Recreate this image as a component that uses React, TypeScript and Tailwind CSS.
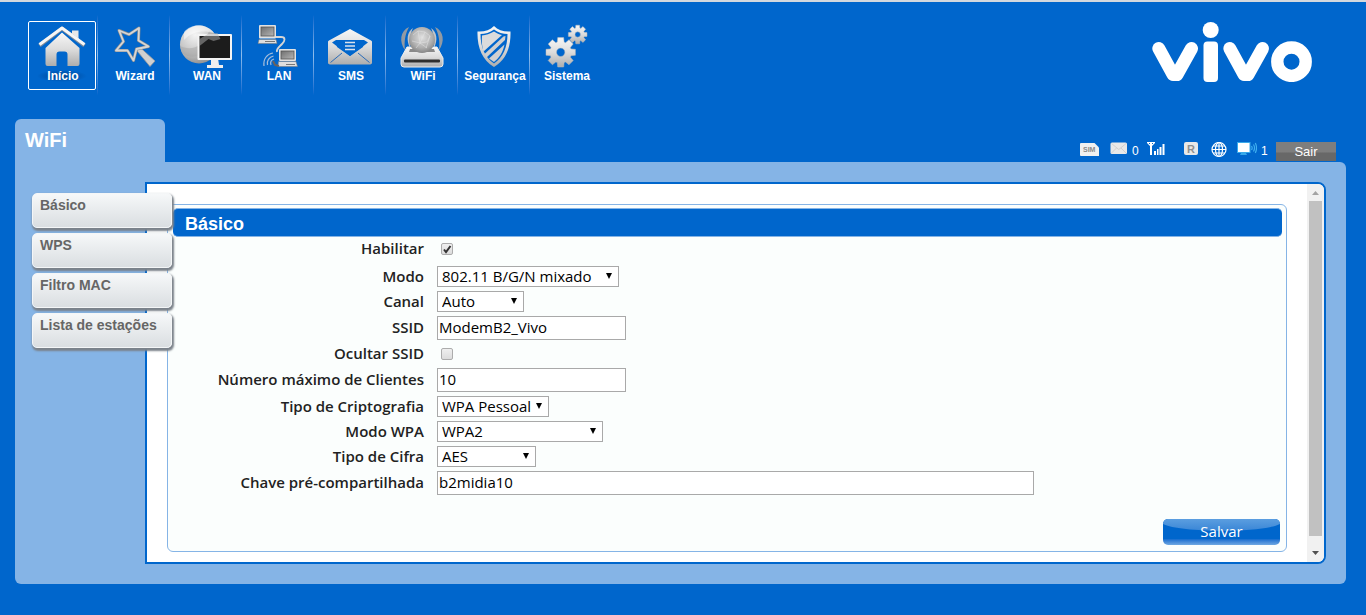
import { useState } from "react";
import type { ReactNode } from "react";

function gearPath(cx: number, cy: number, outer: number, inner: number, hole: number) {
  const teeth = 8;
  const step = (Math.PI * 2) / teeth;
  const pts: string[] = [];
  for (let i = 0; i < teeth; i++) {
    const a = i * step;
    for (const [r, d] of [
      [inner, -0.32],
      [outer, -0.2],
      [outer, 0.2],
      [inner, 0.32],
    ]) {
      pts.push(`${(cx + r * Math.cos(a + d)).toFixed(2)} ${(cy + r * Math.sin(a + d)).toFixed(2)}`);
    }
  }
  return `M${pts.join("L")}ZM${cx - hole} ${cy}a${hole} ${hole} 0 1 0 ${hole * 2} 0a${hole} ${hole} 0 1 0 ${-hole * 2} 0Z`;
}

function Gradients() {
  return (
    <svg width="0" height="0" className="absolute" aria-hidden="true">
      <defs>
        <linearGradient id="metal" x1="0" y1="0" x2="0" y2="1">
          <stop offset="0" stopColor="#f7f7f7" />
          <stop offset="0.5" stopColor="#dcdcdc" />
          <stop offset="1" stopColor="#adadad" />
        </linearGradient>
        <radialGradient id="ball" cx="0.4" cy="0.25" r="0.8">
          <stop offset="0" stopColor="#f4f4f4" />
          <stop offset="0.6" stopColor="#c4c4c4" />
          <stop offset="1" stopColor="#8c8c8c" />
        </radialGradient>
        <radialGradient id="globe" cx="0.5" cy="0.4" r="0.65">
          <stop offset="0" stopColor="#e0e0e0" />
          <stop offset="0.6" stopColor="#b0b0b0" />
          <stop offset="1" stopColor="#7c7c7c" />
        </radialGradient>
        <radialGradient id="shade">
          <stop offset="0" stopColor="#003a80" stopOpacity="0.8" />
          <stop offset="1" stopColor="#003a80" stopOpacity="0" />
        </radialGradient>
        <linearGradient id="screen" x1="0" y1="0" x2="1" y2="1">
          <stop offset="0" stopColor="#6f6f6f" />
          <stop offset="1" stopColor="#b5b5b5" />
        </linearGradient>
      </defs>
    </svg>
  );
}

function NavIcon({ children }: { children: ReactNode }) {
  return (
    <svg viewBox="0 0 72 46" className="h-[46px] w-[72px] shrink-0 overflow-visible" aria-hidden="true">
      {children}
    </svg>
  );
}

const HomeIcon = (
  <NavIcon>
    <ellipse cx="36" cy="54" rx="25" ry="6" fill="url(#shade)" />
    <path d="M46 9.500V8.500h6.500V19L46 13Z" fill="#e8e8e8" />
    <path
      d="M36 10.500 53.500 26v16a2 2 0 0 1-2 2H41.500V32.500a3 3 0 0 0-3-3h-5a3 3 0 0 0-3 3V44H21.500a2 2 0 0 1-2-2V26Z"
      fill="url(#metal)"
    />
    <path d="M13.500 23.500 36 6.500l22.500 17" fill="none" stroke="#7f8b99" strokeWidth="4" strokeLinejoin="round" />
    <path d="M13.500 22.500 36 6l22.500 16.500" fill="none" stroke="#f6f6f6" strokeWidth="3" strokeLinejoin="round" />
  </NavIcon>
);

const WizardIcon = (
  <NavIcon>
    <path d="m37.500 27 3.500-2.500 16 14.500-5 5.500Z" fill="#d0d0d0" stroke="#9b9b9b" strokeWidth="0.8" />
    <path
      d="M21 8.500 31 12.500 41 6 40.500 18.500 50.500 24.500 38.500 27 35.500 38.500 29.500 28.500 18 28.500 25.500 19.500Z"
      fill="#0066cc"
      stroke="#8c8c8c"
      strokeWidth="3"
      strokeLinejoin="round"
    />
    <path
      d="M21 8.500 31 12.500 41 6 40.500 18.500 50.500 24.500 38.500 27 35.500 38.500 29.500 28.500 18 28.500 25.500 19.500Z"
      fill="none"
      stroke="#d6d6d6"
      strokeWidth="1.800"
      strokeLinejoin="round"
    />
  </NavIcon>
);

const WanIcon = (
  <NavIcon>
    <circle cx="29" cy="22.500" r="19" fill="url(#ball)" />
    <path d="M10 24c10 5 24 2 29-15l5 2C42 32 24 40 12 31Z" fill="#a4a4a4" opacity="0.5" />
    <path d="M14 10c8-9 22-9 30 1C34 8 22 9 14 18Z" fill="#fff" opacity="0.5" />
    <path d="M41 36h7l1 7h4v3H37v-3h4Z" fill="#efefef" />
    <rect x="27.500" y="12" width="34.500" height="26" rx="1" fill="#f4f4f4" />
    <rect x="29.500" y="14" width="30.500" height="22" fill="#1c1c1c" />
    <path d="m29.500 17 10-6h8l3 6-7 2-5-2-9 7Z" fill="#b0b0b0" opacity="0.5" />
  </NavIcon>
);

const LanIcon = (
  <NavIcon>
    <path d="M34 15h5c5 0 4 4 1 7s-6 5-5 8" fill="none" stroke="#d5d5d5" strokeWidth="1.800" />
    <rect x="17" y="3" width="17" height="13.500" rx="1" fill="#e2e2e2" />
    <rect x="19" y="5" width="13" height="9" fill="url(#screen)" stroke="#555" strokeWidth="0.800" />
    <path d="M17 17.500h17l1 4H16Z" fill="#dedede" stroke="#777" strokeWidth="0.500" />
    <path d="M23 19.500h10" stroke="#777" strokeWidth="1" />
    <rect x="37" y="27" width="17" height="12" rx="1" fill="#e2e2e2" />
    <rect x="39" y="29" width="13" height="8" fill="url(#screen)" stroke="#555" strokeWidth="0.800" />
    <path d="M36.500 39.500H54l1.500 5H36Z" fill="#dedede" stroke="#777" strokeWidth="0.500" />
    <path d="M44 42.500h9" stroke="#777" strokeWidth="1" />
    <path d="m31 39 2 4 4 1" fill="none" stroke="#6b625c" strokeWidth="2" />
    <path
      d="M22 44c-1-7 3-12 9-13M25.500 43c-1-4 1.500-8 6-9M29 43c-1-3 0-5 3-6"
      fill="none"
      stroke="#a5bddb"
      strokeWidth="1.200"
    />
  </NavIcon>
);

const SmsIcon = (
  <NavIcon>
    <path
      d="M36 7 57 18.500c1 .5 1 1 1 2V40a2 2 0 0 1-2 2.500H16A2 2 0 0 1 14 40V20.500c0-1 0-1.500 1-2Z"
      fill="url(#metal)"
    />
    <path d="M18 20.500 22 18h28l4 2.500L36 34Z" fill="#0066cc" />
    <path d="M22 20h28l-1 5-13 9-13-9Z" fill="#0066cc" />
    <path d="M16.500 40.500 28 31M55.500 40.500 44 31" stroke="#2b6cb8" strokeWidth="1" />
    <path d="M31 20.500h10M31 24h10M31 27.500h10" stroke="#d9e2ec" strokeWidth="1.600" />
  </NavIcon>
);

const WifiIcon = (
  <NavIcon>
    <path d="M23 5C14 9 13 20 19 28c-1-8 0-16 4-23ZM49 5c9 4 10 15 4 23 1-8 0-16-4-23Z" fill="#929aa3" />
    <path d="M27 6c-6 4-7 12-3 20 0-8 0-14 3-20ZM45 6c6 4 7 12 3 20 0-8 0-14-3-20Z" fill="#c2c5c9" />
    <path d="M21 25h30l6 11v6a3 3 0 0 1-3 3H18a3 3 0 0 1-3-3v-6Z" fill="url(#metal)" stroke="#eee" />
    <rect x="18" y="37.500" width="36" height="3" rx="1" fill="#2e2e2e" />
    <path d="M24 27h24l1 3H23Z" fill="#8a8a8a" />
    <circle cx="36" cy="18" r="13" fill="url(#globe)" />
    <path
      d="m27 13 5-4 7 1 5 4-3 6-7 1-4 5M32 9l2 12 7 5M39 10l-5 11-8-2M44 14l-4 12"
      fill="none"
      stroke="#e4e4e4"
      strokeWidth="0.500"
    />
  </NavIcon>
);

const ShieldIcon = (
  <NavIcon>
    <path
      d="M36 4c4 4 10 6 16.500 5.500C53 25 48 38 36 45 24 38 19 25 19.500 9.500 26 10 32 8 36 4Z"
      fill="url(#metal)"
    />
    <path
      d="M36 7.500c4 3 9 4.500 13.500 4.500C49.500 25 45 35.500 36 41.500 27 35.500 22.500 25 22.500 12c4.500 0 9.500-1.500 13.500-4.500Z"
      fill="#0066cc"
    />
    <path d="M36 9.500c3 2 5 3 8 3.500L25.500 29.500C24 25 23.500 19 24 13.500c4-.5 8-1.500 12-4Z" fill="#dcdcdc" />
    <path d="m26.500 32 19-17.500 2-.5-.5 4-18.500 17.500ZM46.500 22.500C45 30 41.500 35.500 36 40l-5-3.500Z" fill="#d0d0d0" />
  </NavIcon>
);

const GearsIcon = (
  <NavIcon>
    <path d={gearPath(30.7, 30.3, 15, 10.8, 4.2)} fill="url(#metal)" stroke="#b9b9b9" strokeWidth="0.500" fillRule="evenodd" />
    <path d={gearPath(47.7, 12.5, 9.5, 6.8, 2.7)} fill="url(#metal)" stroke="#b9b9b9" strokeWidth="0.500" fillRule="evenodd" />
  </NavIcon>
);

const navItems = [
  { label: "Início", icon: HomeIcon },
  { label: "Wizard", icon: WizardIcon },
  { label: "WAN", icon: WanIcon },
  { label: "LAN", icon: LanIcon },
  { label: "SMS", icon: SmsIcon },
  { label: "WiFi", icon: WifiIcon },
  { label: "Segurança", icon: ShieldIcon },
  { label: "Sistema", icon: GearsIcon },
];

const sideItems = ["Básico", "WPS", "Filtro MAC", "Lista de estações"];

function VivoLogo() {
  return (
    <svg viewBox="0 0 160 60" className="h-[60px] w-[160px]" role="img" aria-label="vivo">
      <g fill="none" stroke="#fff" strokeWidth="13" strokeLinejoin="round" strokeLinecap="round">
        <path d="M6.800 26.500 21 52.500h4L39.500 26.500" />
        <path d="M77.800 26.500 92 52.500h4L110.500 26.500" />
      </g>
      <rect x="51.500" y="19.500" width="14.500" height="40.500" rx="4" fill="#fff" />
      <circle cx="58.700" cy="8" r="8" fill="#fff" />
      <circle cx="139.500" cy="39.700" r="14.200" fill="none" stroke="#fff" strokeWidth="12.400" />
    </svg>
  );
}

function StatusBar() {
  return (
    <div className="mr-[10px] flex items-start pb-px text-xs leading-[19px] text-white">
      <svg viewBox="0 0 20 16" className="mr-[10px] h-4 w-5" role="img" aria-label="SIM">
        <path d="M1 1h13.500L19 5.500V14H1a1 1 0 0 1-1-1V2a1 1 0 0 1 1-1Z" fill="#f0f0f0" />
        <text x="3" y="10" fontSize="7" fontWeight="bold" fontFamily="Liberation Sans, sans-serif" fill="#8a8a8a">
          SIM
        </text>
      </svg>
      <svg viewBox="0 0 18 16" className="mr-1 h-4 w-[18px]" aria-hidden="true">
        <rect x="0.500" y="0.500" width="16.500" height="11.500" rx="1.500" fill="#e8e8e8" />
        <path d="m1.500 1.500 7.300 6 7.300-6M1.500 11l5-5M16 11l-5-5" fill="none" stroke="#c9c9c9" strokeWidth="0.800" />
      </svg>
      <span className="mr-2 w-[7px]">0</span>
      <svg viewBox="0 0 18 16" className="mr-[18px] h-4 w-[18px]" aria-hidden="true">
        <path d="M0 0h8v1L5 4v9H3V4L0 1Z" fill="#fff" />
        <path d="M2 1h1v1H2ZM5 1h1v1H5Z" fill="#0066cc" />
        <path d="M7 9h2v4H7ZM10 7h1.500v6H10ZM12.500 5h2v8h-2ZM15.500 2h2v11h-2Z" fill="#fff" />
      </svg>
      <svg viewBox="0 0 16 16" className="mr-3 size-4" role="img" aria-label="Roaming">
        <rect x="1" y="0" width="14" height="13" rx="2" fill="#e8e8e8" />
        <text x="4" y="10.500" fontSize="11" fontWeight="bold" fontFamily="Liberation Sans, sans-serif" fill="#8f8f8f">
          R
        </text>
      </svg>
      <svg viewBox="0 0 16 16" className="mr-[10px] size-4" aria-hidden="true">
        <g fill="none" stroke="#fff" strokeWidth="1.200">
          <circle cx="8" cy="7.500" r="7" />
          <ellipse cx="8" cy="7.500" rx="3.500" ry="7" />
          <path d="M8 .5v14M1 7.500h14M2 4h12M2 11h12" />
        </g>
      </svg>
      <svg viewBox="0 0 20 16" className="mr-1 h-4 w-5" aria-hidden="true">
        <rect x="0.500" y="0.500" width="12.500" height="10" fill="#fff" stroke="#38a9ea" />
        <path d="M4 11h5l1 2H3Z" fill="#38a9ea" />
        <path
          d="M14.500 4c1 1.500 1 2.500 0 4M16.500 2.500c1.500 2.500 1.500 4.500 0 7M18.300 1c1.500 3 1.500 7 0 10"
          fill="none"
          stroke="#3fb0f0"
          strokeWidth="1.200"
        />
      </svg>
      <span className="mr-2 w-[7px]">1</span>
      <button
        type="button"
        className="h-[19px] w-[60px] bg-linear-to-b from-[#7e7e7e] from-50% to-[#686868] to-60% text-[13px] leading-[19px]"
      >
        Sair
      </button>
    </div>
  );
}

function Row({
  id,
  label,
  height = "h-[25px]",
  children,
}: {
  id: string;
  label: string;
  height?: string;
  children: ReactNode;
}) {
  return (
    <div className={`flex items-center ${height}`}>
      <label htmlFor={id} className="mr-[13px] w-64 shrink-0 pb-[2px] text-right font-semibold text-[#222]">
        {label}
      </label>
      {children}
    </div>
  );
}

function Check({ id, initial }: { id: string; initial: boolean }) {
  const [on, setOn] = useState(initial);
  return (
    <span className="relative ml-1 flex size-3">
      <input
        id={id}
        type="checkbox"
        checked={on}
        onChange={(e) => setOn(e.target.checked)}
        className="size-3 appearance-none rounded-xs border border-[#acacac] bg-linear-to-b from-[#efefef] to-[#dcdcdc]"
      />
      {on && (
        <svg viewBox="0 0 12 12" className="pointer-events-none absolute inset-0 size-3" aria-hidden="true">
          <path d="m3 6.500 2 2.500 4.500-6" fill="none" stroke="#333" strokeWidth="2" />
        </svg>
      )}
    </span>
  );
}

function Select({ id, options, width }: { id: string; options: string[]; width: string }) {
  return (
    <span className={`relative ${width}`}>
      <select id={id} className="block h-[21px] w-full appearance-none border border-[#a9a9a9] bg-white pl-1 leading-[19px] text-black">
        {options.map((o) => (
          <option key={o}>{o}</option>
        ))}
      </select>
      <svg viewBox="0 0 6 6" className="pointer-events-none absolute top-[7px] right-[7px] size-[6px]" aria-hidden="true">
        <path d="M0 0h6L3 6Z" fill="#000" />
      </svg>
    </span>
  );
}

function TextBox({ id, value, width }: { id: string; value: string; width: string }) {
  return (
    <input
      id={id}
      type="text"
      defaultValue={value}
      className={`h-6 border border-[#a9a9a9] bg-white px-px pb-[2px] text-black ${width}`}
    />
  );
}

function WifiForm() {
  return (
    <form
      onSubmit={(e) => e.preventDefault()}
      className="flex min-h-[348px] flex-col rounded-md border border-[#85b4e6] bg-[#fbfefd] pt-[3px] font-['Open_Sans','Noto_Sans',sans-serif] text-[15px] leading-5"
    >
      <h2 className="mr-1 mb-px ml-[5px] h-[29px] rounded-[5px] border-y border-[#85b4e6] bg-[#0066cc] pl-3 font-['Liberation_Sans',Arial,sans-serif] text-lg leading-[30px] font-bold text-white">
        Básico
      </h2>
      <Row id="enable" label="Habilitar" height="mb-1 h-[22px]">
        <Check id="enable" initial={true} />
      </Row>
      <Row id="mode" label="Modo">
        <Select id="mode" options={["802.11 B/G/N mixado"]} width="w-[182px]" />
      </Row>
      <Row id="channel" label="Canal">
        <Select id="channel" options={["Auto"]} width="w-[87px]" />
      </Row>
      <Row id="ssid" label="SSID" height="h-7">
        <TextBox id="ssid" value="ModemB2_Vivo" width="w-[189px]" />
      </Row>
      <Row id="hide" label="Ocultar SSID" height="h-6">
        <Check id="hide" initial={false} />
      </Row>
      <Row id="clients" label="Número máximo de Clientes" height="h-7">
        <TextBox id="clients" value="10" width="w-[189px]" />
      </Row>
      <Row id="crypto" label="Tipo de Criptografia">
        <Select id="crypto" options={["WPA Pessoal"]} width="w-[112px]" />
      </Row>
      <Row id="wpa" label="Modo WPA">
        <Select id="wpa" options={["WPA2"]} width="w-[166px]" />
      </Row>
      <Row id="cipher" label="Tipo de Cifra">
        <Select id="cipher" options={["AES"]} width="w-[99px]" />
      </Row>
      <Row id="key" label="Chave pré-compartilhada" height="h-7">
        <TextBox id="key" value="b2midia10" width="w-[597px]" />
      </Row>
      <button
        type="submit"
        className="relative mt-auto mr-[6px] mb-[6px] h-[26px] w-[117px] self-end overflow-hidden rounded-[5px] bg-linear-to-b from-[#0066cc] from-75% to-[#6fa8e2] pb-[2px] text-[15px] leading-6 text-white"
      >
        <svg viewBox="0 0 117 26" preserveAspectRatio="none" className="absolute inset-0 size-full" aria-hidden="true">
          <defs>
            <linearGradient id="gloss" x1="0" y1="0" x2="0" y2="1">
              <stop offset="0" stopColor="#5b9ee0" />
              <stop offset="1" stopColor="#3a86d6" />
            </linearGradient>
          </defs>
          <path d="M0 0h117v5C100 14 17 14 0 5Z" fill="url(#gloss)" />
        </svg>
        <span className="relative">Salvar</span>
      </button>
    </form>
  );
}

function ScrollBar() {
  return (
    <div className="flex w-[17px] shrink-0 flex-col items-center bg-[#f1f1f1]" aria-hidden="true">
      <svg viewBox="0 0 17 17" className="size-[17px]">
        <path d="M5 11h7L8.500 7Z" fill="#a3a3a3" />
      </svg>
      <div className="mb-[9px] w-[13px] flex-1 bg-[#c1c1c1]" />
      <svg viewBox="0 0 17 17" className="size-[17px]">
        <path d="M5 6h7l-3.500 4Z" fill="#505050" />
      </svg>
    </div>
  );
}

export default function App() {
  return (
    <div className="min-h-screen border-t-2 border-[#d3d8de] bg-[#0066cc] font-['Liberation_Sans',Arial,sans-serif]">
      <Gradients />
      <header className="flex items-start justify-between pt-[13px] pr-[54px] pl-[26px]">
        <nav className="flex">
          {navItems.map((item, i) => (
            <div key={item.label} className="flex h-20 w-[72px]">
              <a
                href="#"
                className={`flex w-[72px] shrink-0 flex-col items-center pt-[7px] text-xs leading-4 font-bold text-white ${
                  i === 0 ? "relative before:absolute before:inset-x-[2px] before:top-[6px] before:h-[69px] before:rounded-xs before:border before:border-white" : ""
                }`}
              >
                {item.icon}
                <span className="relative pl-0.5">{item.label}</span>
              </a>
              {i < navItems.length - 1 && (
                <span className="-ml-px w-px shrink-0 bg-linear-to-b from-[#0066cc] via-[#8fbdec] to-[#0066cc]" />
              )}
            </div>
          ))}
        </nav>
        <div className="pt-[7px]">
          <VivoLogo />
        </div>
      </header>

      <main className="mt-6 mr-5 ml-[15px]">
        <div className="flex items-end justify-between">
          <h1 className="h-[43px] w-[150px] rounded-t-md bg-[#85b4e6] pl-[10px] text-xl leading-[42px] font-bold text-white">
            WiFi
          </h1>
          <StatusBar />
        </div>
        <div className="flex min-h-[422px] items-stretch rounded-tr-md rounded-b-md bg-[#85b4e6] pt-5 pr-5 pb-5 pl-[17px]">
          <ul className="relative z-10 mt-[11px] flex w-[140px] shrink-0 flex-col gap-[5px]">
            {sideItems.map((label) => (
              <li key={label}>
                <a
                  href="#"
                  className="block h-[35px] rounded-[5px] border border-[#f4f6f7] bg-linear-to-b from-[#f6f8f9] to-[#dadee1] pl-[7px] text-sm leading-[22px] font-bold text-[#666] shadow-[1px_2px_2px_1px_#7b828a]"
                >
                  {label}
                </a>
              </li>
            ))}
          </ul>
          <div className="-ml-[27px] flex min-w-0 flex-1 overflow-hidden rounded-r-lg border-2 border-[#0066cc] bg-white">
            <div className="min-w-0 flex-1 px-5 pt-5 pb-[10px]">
              <WifiForm />
            </div>
            <ScrollBar />
          </div>
        </div>
      </main>
    </div>
  );
}
